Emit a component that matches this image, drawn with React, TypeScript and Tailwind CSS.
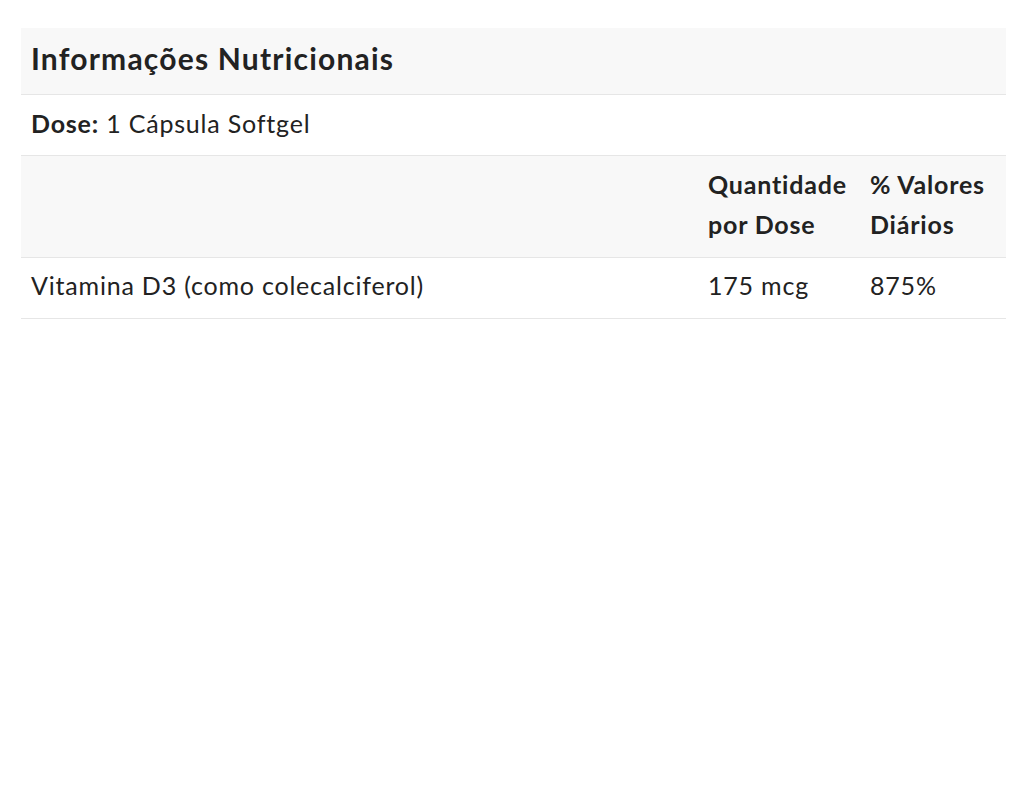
export default function App() {
  return (
    <div className="min-h-screen bg-white pt-[28px] px-[21px]" style={{ fontFamily: 'Lato, "Open Sans", sans-serif' }}>
      <table className="w-[985px] border-collapse text-[#222] text-[25px] leading-[40px] tracking-[0.8px] table-fixed [font-variant-ligatures:none]">
        <colgroup>
          <col className="w-[677px]" />
          <col className="w-[162px]" />
          <col className="w-[146px]" />
        </colgroup>
        <thead>
          <tr className="bg-[#f8f8f8] border-b border-[#e6e6e6]">
            <th colSpan={3} className="text-left font-bold text-[30px] tracking-[1.2px] leading-[44px] px-[10px] pt-[8px] pb-[14px]">
              Informações Nutricionais
            </th>
          </tr>
        </thead>
        <tbody>
          <tr className="border-b border-[#e6e6e6]">
            <td colSpan={3} className="px-[10px] pt-[8px] pb-[12px]">
              <b>Dose:</b> 1 Cápsula Softgel
            </td>
          </tr>
          <tr className="bg-[#f8f8f8] border-b border-[#e6e6e6] font-bold">
            <td className="px-[10px] pt-[8px] pb-[13px]"></td>
            <td className="px-[10px] pt-[8px] pb-[13px]">Quantidade por Dose</td>
            <td className="px-[10px] pt-[8px] pb-[13px]">% Valores Diários</td>
          </tr>
          <tr className="border-b border-[#e6e6e6]">
            <td className="px-[10px] pt-[7px] pb-[13px]">Vitamina D3 (como colecalciferol)</td>
            <td className="px-[10px] pt-[7px] pb-[13px]">175 mcg</td>
            <td className="px-[10px] pt-[7px] pb-[13px]">875%</td>
          </tr>
        </tbody>
      </table>
    </div>
  );
}
